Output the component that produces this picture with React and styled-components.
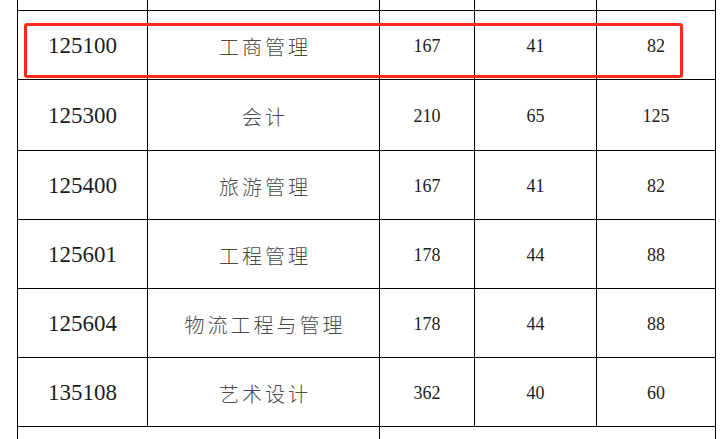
import React from "react";
import styled, { createGlobalStyle } from "styled-components";

const Global = createGlobalStyle`
  html, body { margin: 0; padding: 0; background: #fff; overflow: hidden; }
  body { width: 727px; height: 439px; }
`;

const Page = styled.div`
  width: 727px;
  height: 439px;
  overflow: hidden;
  background: #fff;
`;

const Table = styled.div`
  position: relative;
  margin-left: 17px;
  display: grid;
  grid-template-columns: 130px 232px 95px 122px 119px;
  grid-template-rows: 11px 69px 71px 69px 69px 69px 69px 20px;
  border-left: 1px solid #000;
  width: max-content;
`;

const Cell = styled.div`
  box-sizing: border-box;
  border-right: 1px solid #000;
  border-bottom: ${(p) => (p.$open ? "none" : "1px solid #000")};
  display: flex;
  align-items: center;
  justify-content: center;
  grid-column: ${(p) => (p.$span ? `span ${p.$span}` : "auto")};
  padding-top: 2px;
`;

const Code = styled.span`
  font-family: "Liberation Serif", "Times New Roman", serif;
  font-size: 23px;
  color: #1c1c1c;
`;

const Name = styled.span`
  font-family: "Noto Sans CJK SC", "Noto Sans", sans-serif;
  font-weight: 300;
  font-size: 20px;
  letter-spacing: 3px;
  padding-left: 3px;
  color: #4a4a4a;
`;

const Num = styled.span`
  font-family: "Liberation Serif", "Times New Roman", serif;
  font-size: 18px;
  color: #1c1c1c;
`;

const Highlight = styled.div`
  position: absolute;
  left: 6px;
  top: 23px;
  width: 659px;
  height: 55px;
  box-sizing: border-box;
  border: 3px solid #fd2a1d;
  border-radius: 3px;
  pointer-events: none;
`;

const rows = [
  ["125100", "工商管理", "167", "41", "82"],
  ["125300", "会计", "210", "65", "125"],
  ["125400", "旅游管理", "167", "41", "82"],
  ["125601", "工程管理", "178", "44", "88"],
  ["125604", "物流工程与管理", "178", "44", "88"],
  ["135108", "艺术设计", "362", "40", "60"],
];

export default function App() {
  return (
    <Page>
      <Global />
      <Table>
        {[0, 1, 2, 3, 4].map((i) => (
          <Cell key={`t${i}`} />
        ))}
        {rows.map((r) => (
          <React.Fragment key={r[0]}>
            <Cell>
              <Code>{r[0]}</Code>
            </Cell>
            <Cell>
              <Name>{r[1]}</Name>
            </Cell>
            <Cell>
              <Num>{r[2]}</Num>
            </Cell>
            <Cell>
              <Num>{r[3]}</Num>
            </Cell>
            <Cell>
              <Num>{r[4]}</Num>
            </Cell>
          </React.Fragment>
        ))}
        <Cell $span={2} $open />
        <Cell $span={3} $open />
        <Highlight />
      </Table>
    </Page>
  );
}
